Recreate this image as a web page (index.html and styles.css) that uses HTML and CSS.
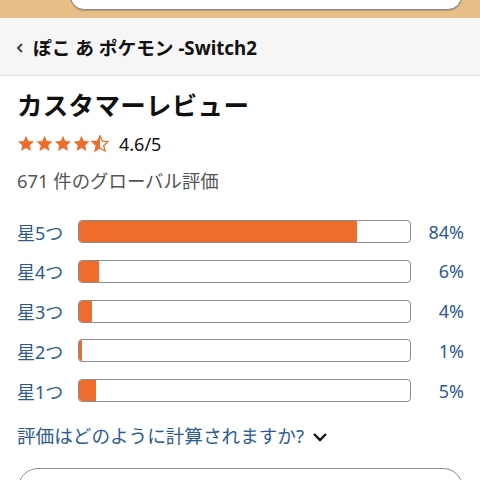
FILE: index.html
```html
<!DOCTYPE html>
<html lang="ja">
<head>
<meta charset="utf-8">
<link rel="stylesheet" href="styles.css">
</head>
<body>
<div class="top">
  <div class="searchbox"></div>
</div>
<div class="nav">
  <svg class="back" width="10" height="12" viewBox="0 0 10 12"><path d="M7 2 L3 6 L7 10" fill="none" stroke="#444" stroke-width="2"/></svg>
  <span class="navtitle">ぽこ あ ポケモン -Switch2</span>
</div>
<div class="content">
  <h1 class="heading">カスタマーレビュー</h1>
  <div class="rating">
    <div class="stars">
      <svg width="92" height="18" viewBox="0 0 92 18">
        <defs>
          <path id="st" d="M9 0.8 L11.3 6.1 L17 6.6 L12.7 10.4 L14 16 L9 13 L4 16 L5.3 10.4 L1 6.6 L6.7 6.1 Z"/>
          <clipPath id="half"><rect x="0" y="0" width="9" height="18"/></clipPath>
        </defs>
        <use href="#st" x="0" fill="#ee6d2c"/>
        <use href="#st" x="18.5" fill="#ee6d2c"/>
        <use href="#st" x="37" fill="#ee6d2c"/>
        <use href="#st" x="55.5" fill="#ee6d2c"/>
        <g transform="translate(74,0)">
          <use href="#st" fill="none" stroke="#ee6d2c" stroke-width="1.3"/>
          <use href="#st" fill="#ee6d2c" clip-path="url(#half)"/>
        </g>
      </svg>
    </div>
    <span class="score">4.6/5</span>
  </div>
  <div class="total">671 件のグローバル評価</div>
  <div class="hist">
    <div class="row"><span class="label">星5つ</span><div class="bar"><div class="fill" style="width:84%"></div></div><span class="pct">84%</span></div>
    <div class="row"><span class="label">星4つ</span><div class="bar"><div class="fill" style="width:6%"></div></div><span class="pct">6%</span></div>
    <div class="row"><span class="label">星3つ</span><div class="bar"><div class="fill" style="width:4%"></div></div><span class="pct">4%</span></div>
    <div class="row"><span class="label">星2つ</span><div class="bar"><div class="fill" style="width:1%"></div></div><span class="pct">1%</span></div>
    <div class="row"><span class="label">星1つ</span><div class="bar"><div class="fill" style="width:5%"></div></div><span class="pct">5%</span></div>
  </div>
  <div class="how">評価はどのように計算されますか?
    <svg class="chev" width="16" height="10" viewBox="0 0 16 10"><path d="M2 2 L8 8 L14 2" fill="none" stroke="#111" stroke-width="2.4"/></svg>
  </div>
  <div class="bottombox"></div>
</div>
</body>
</html>
```
FILE: styles.css
```css
* { box-sizing: border-box; }
html, body { margin: 0; padding: 0; background: #fff; }
body {
  font-family: "Noto Sans", "Noto Sans CJK JP", sans-serif;
  width: 480px;
  height: 480px;
  overflow: hidden;
}
.top {
  height: 18px;
  background: #e8bf89;
  padding: 0 18px 0 70px;
  overflow: hidden;
}
.searchbox {
  height: 28px;
  margin-top: -18px;
  background: #fff;
  border: 1px solid #8a8a8a;
  border-radius: 16px;
  box-shadow: 0 1px 1px rgba(0,0,0,0.2);
}
.nav {
  height: 58px;
  background: #f6f6f6;
  border-bottom: 1px solid #e2e2e2;
  display: flex;
  align-items: center;
  padding: 0 0 0 15px;
  gap: 8px;
}
.back { flex: none; margin-top: 2px; }
.navtitle {
  font-size: 18.7px;
  font-weight: 700;
  color: #111;
}
.content {
  padding: 0 17px;
  height: 404px;
  overflow: hidden;
}
.heading {
  margin: 12px 0 0 0;
  font-size: 25.5px;
  font-weight: 700;
  color: #0f1111;
  line-height: 34px;
  letter-spacing: 0.3px;
}
.rating {
  display: flex;
  align-items: center;
  gap: 10px;
  margin-top: 8px;
  height: 28px;
}
.stars { display: flex; height: 18px; }
.score { font-size: 18px; color: #0f1111; }
.total {
  font-size: 18.4px;
  color: #555;
  margin-top: 10px;
  line-height: 26px;
}
.hist {
  margin-top: 26px;
  display: flex;
  flex-direction: column;
  gap: 16.8px;
}
.row {
  display: flex;
  align-items: center;
  height: 23px;
}
.label {
  width: 61px;
  flex: none;
  font-size: 18px;
  color: #2d5b90;
}
.bar {
  width: 333px;
  height: 23px;
  flex: none;
  border: 1px solid #8c8c8c;
  border-radius: 4px;
  background: #fff;
  overflow: hidden;
}
.fill {
  height: 100%;
  background: #ee6d2c;
}
.pct {
  flex: 1;
  text-align: right;
  font-size: 18px;
  color: #2d5b90;
  margin-right: -1px;
}
.how {
  margin-top: 21px;
  font-size: 18.6px;
  color: #2d5b90;
  display: flex;
  align-items: center;
  gap: 8px;
  line-height: 26px;
}
.chev { margin-top: 1px; }
.bottombox {
  margin-top: 19px;
  margin-left: 1px;
  height: 60px;
  border: 1px solid #8c8c8c;
  border-radius: 20px;
}
```
